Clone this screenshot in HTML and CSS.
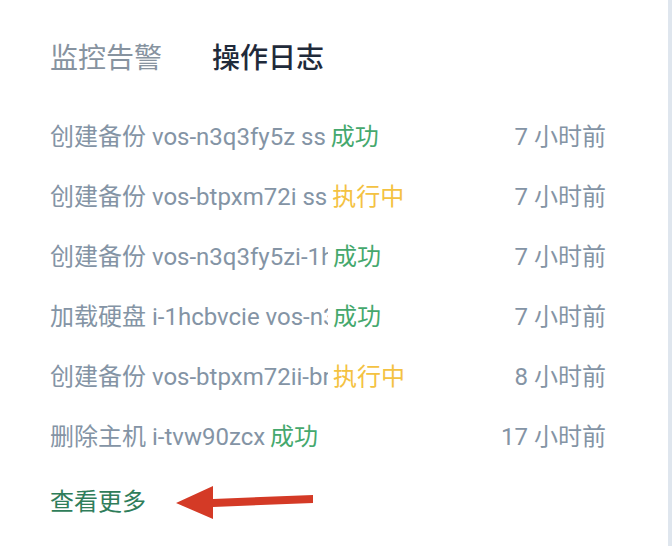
FILE: index.html
```html
<!DOCTYPE html>
<html lang="zh-CN">
<head>
<meta charset="utf-8">
<link rel="stylesheet" href="styles.css">
</head>
<body>
<div class="page">
  <section class="panel">
    <nav class="tabs">
      <span class="tab">监控告警</span>
      <span class="tab active">操作日志</span>
    </nav>
    <ul class="list">
      <li class="row"><span class="name">创建备份 vos-n3q3fy5z ss</span><span class="status ok">成功</span><span class="time">7 小时前</span></li>
      <li class="row"><span class="name">创建备份 vos-btpxm72i ss</span><span class="status run">执行中</span><span class="time">7 小时前</span></li>
      <li class="row"><span class="name">创建备份 vos-n3q3fy5zi-1h</span><span class="status ok">成功</span><span class="time">7 小时前</span></li>
      <li class="row"><span class="name">加载硬盘 i-1hcbvcie vos-n3</span><span class="status ok">成功</span><span class="time">7 小时前</span></li>
      <li class="row"><span class="name">创建备份 vos-btpxm72ii-br</span><span class="status run">执行中</span><span class="time">8 小时前</span></li>
      <li class="row"><span class="name">删除主机 i-tvw90zcx</span><span class="status ok">成功</span><span class="time">17 小时前</span></li>
    </ul>
    <div class="more-row">
      <a class="more" href="#">查看更多</a>
      <svg class="arrow" width="150" height="44" viewBox="170 480 150 44" aria-hidden="true">
        <polygon points="176,503 213,486 213,499 313,495 313,503 213,507 213,519" fill="#d43a26"/>
      </svg>
    </div>
  </section>
  <div class="edge"></div>
</div>
</body>
</html>
```
FILE: styles.css
```css
html, body {
  margin: 0;
  padding: 0;
  background: #ffffff;
}
.page {
  display: flex;
  width: 672px;
  height: 546px;
  overflow: hidden;
}
.panel {
  flex: 1;
  padding: 36px 62px 0 50px;
  font-family: Roboto, "Noto Sans CJK SC", sans-serif;
}
.edge {
  width: 4px;
  background: #dfe6ee;
}
.tabs {
  display: flex;
  gap: 50px;
  font-family: "Noto Sans CJK SC", sans-serif;
  font-size: 28px;
  line-height: 40px;
}
.tab {
  color: #8793a0;
}
.tab.active {
  color: #1f2a3a;
  font-weight: 500;
}
.list {
  list-style: none;
  margin: 28px 0 0;
  padding: 0;
}
.row {
  display: flex;
  align-items: center;
  height: 60px;
  font-size: 24px;
  color: #8494a5;
  white-space: nowrap;
}
.name {
  max-width: 278px;
  overflow: hidden;
}
.status {
  margin-left: 5px;
  font-family: "Noto Sans CJK SC", sans-serif;
}
.status.ok {
  color: #45a86d;
}
.status.run {
  color: #f4c242;
}
.time {
  margin-left: auto;
}
.more-row {
  position: relative;
  margin-top: 18px;
  height: 36px;
  line-height: 36px;
}
.more {
  font-family: "Noto Sans CJK SC", sans-serif;
  font-size: 24px;
  color: #2f7d5a;
  text-decoration: none;
}
.arrow {
  position: absolute;
  left: 120px;
  top: -2px;
}
```
